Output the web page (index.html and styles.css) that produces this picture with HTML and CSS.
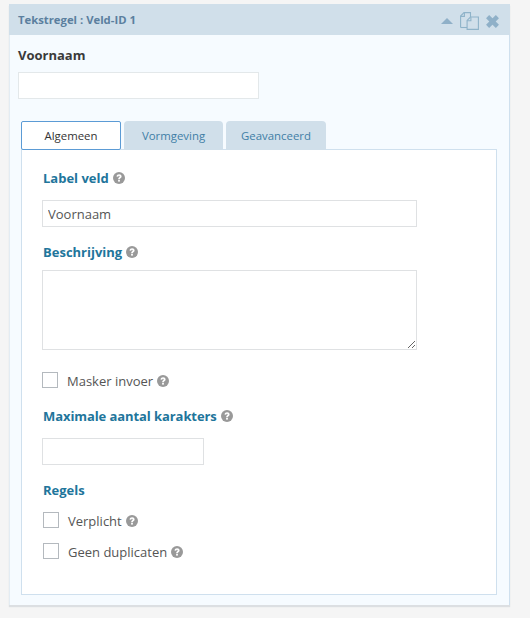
FILE: index.html
```html
<!DOCTYPE html>
<html lang="nl">
<head>
    <meta charset="UTF-8">
    <title>Tekstregel</title>
    <link rel="stylesheet" href="styles.css">
</head>
<body>
    <svg class="icon-defs" width="0" height="0">
        <symbol id="help" viewBox="0 0 12 12">
            <circle cx="6" cy="6" r="6" fill="#999"/>
            <path d="M3.5 4.6C3.7 3.1 4.7 2.3 6.1 2.3c1.4 0 2.5.9 2.5 2.1 0 1.7-1.7 1.6-1.7 2.8H5.1c0-2 1.6-2 1.6-2.8 0-.4-.3-.6-.7-.6-.5 0-.7.3-.8.9z" fill="#fff"/>
            <rect x="5.1" y="7.9" width="1.8" height="1.7" fill="#fff"/>
        </symbol>
    </svg>

    <div class="field-box">
        <div class="field-header">
            <span class="field-title">Tekstregel : Veld-ID 1</span>
            <div class="field-actions">
                <svg class="icon-up" width="12" height="6" viewBox="0 0 12 6"><path d="M6 0l6 6H0z" fill="#8fb0c8"/></svg>
                <svg class="icon-copy" width="19" height="18" viewBox="0 0 19 18" fill="none" stroke="#8fb3c9" stroke-width="1.1">
                    <path d="M.6 15.5V4L4 .6h6.5V5"/>
                    <path d="M.6 4.4h3.8V.8"/>
                    <path d="M.6 15.5h6.5"/>
                    <path d="M7.1 17.4V8.4L10.5 5h7.9v12.4z" fill="#d0dfea"/>
                    <path d="M7.1 8.8h3.8V5.2"/>
                </svg>
                <svg class="icon-close" width="13" height="13" viewBox="0 0 13 13"><path d="M1.6 1.6l9.8 9.8M11.4 1.6l-9.8 9.8" stroke="#8fb0c8" stroke-width="4.4"/></svg>
            </div>
        </div>

        <div class="field-body">
            <div class="preview-label">Voornaam</div>
            <input type="text" class="input preview-input">

            <ul class="tabs">
                <li class="tab active">Algemeen</li>
                <li class="tab tab-narrow">Vormgeving</li>
                <li class="tab">Geavanceerd</li>
            </ul>

            <div class="tab-panel">
                <div class="setting-label">Label veld <svg class="help"><use href="#help"/></svg></div>
                <input type="text" class="input input-wide" value="Voornaam">

                <div class="setting-label label-desc">Beschrijving <svg class="help"><use href="#help"/></svg></div>
                <textarea class="input textarea"></textarea>

                <label class="check check-mask"><span class="box"></span>Masker invoer <svg class="help"><use href="#help"/></svg></label>

                <div class="setting-label label-max">Maximale aantal karakters <svg class="help"><use href="#help"/></svg></div>
                <input type="text" class="input input-small">

                <div class="setting-label label-rules">Regels</div>
                <label class="check check-rule"><span class="box"></span>Verplicht <svg class="help"><use href="#help"/></svg></label>
                <label class="check check-rule"><span class="box"></span>Geen duplicaten <svg class="help"><use href="#help"/></svg></label>
            </div>
        </div>
    </div>
</body>
</html>
```

FILE: styles.css
```css
* {
    box-sizing: border-box;
    margin: 0;
    padding: 0;
}

body {
    background-color: #f5f5f5;
    font-family: "Open Sans", sans-serif;
    font-size: 13px;
    color: #444;
    padding: 4px 20px 0 9px;
    height: 618px;
    overflow: hidden;
}

.icon-defs {
    position: absolute;
}

/* Field box */
.field-box {
    width: 501px;
    height: 601px;
    background-color: #f6fbff;
    border-right: 1px solid #cfe0ee;
    border-left: 1px solid #e3ecf3;
    box-shadow: 0 2px 1px #dcdfe2;
}

.field-header {
    display: flex;
    justify-content: space-between;
    align-items: center;
    height: 31px;
    margin-right: -1px;
    margin-left: -1px;
    padding: 0 11px 0 9px;
    background-color: #d0dfea;
}

.field-title {
    font-size: 11.3px;
    font-weight: 700;
    color: #5b7f9f;
}

.field-actions {
    display: flex;
    align-items: center;
    gap: 7px;
    padding-top: 3px;
}

.field-body {
    padding: 11px 11px 0 8px;
}

.preview-label {
    font-size: 13px;
    font-weight: 700;
    line-height: 18px;
    color: #3a3a3a;
}

/* Inputs */
.input {
    display: block;
    height: 27px;
    padding: 0 5px;
    background-color: #fff;
    border: 1px solid #dfe1e3;
    font-family: "Open Sans", sans-serif;
    font-size: 13px;
    color: #555;
    outline: none;
}

.preview-input {
    width: 241px;
    margin-top: 8px;
    border-color: #e3e8ea;
}

.input-wide {
    width: 375px;
    margin-top: 13px;
}

.textarea {
    width: 375px;
    height: 80px;
    margin-top: 9px;
}

.input-small {
    width: 162px;
    margin-top: 13px;
}

/* Tabs */
.tabs {
    display: flex;
    gap: 3px;
    list-style: none;
    margin-top: 22px;
    margin-left: 3px;
}

.tab {
    width: 100px;
    height: 29px;
    background-color: #d0dfea;
    border-radius: 4px 4px 0 0;
    text-align: center;
    font-size: 11.4px;
    line-height: 29px;
    color: #3f7ea6;
}

.tab-narrow {
    width: 99px;
}

.active {
    position: relative;
    z-index: 1;
    background-color: #fff;
    border: 1px solid #5b9bd5;
    border-radius: 2px;
    line-height: 27px;
    color: #333;
}

.tab-panel {
    width: 476px;
    height: 446px;
    margin-top: -1px;
    margin-left: 3px;
    padding: 19px 0 0 20px;
    background-color: #fff;
    border: 1px solid #cfe0ee;
}

.setting-label {
    display: flex;
    align-items: center;
    gap: 4px;
    height: 18px;
    margin-left: 1px;
    font-size: 13px;
    font-weight: 700;
    color: #21759b;
}

.label-desc {
    margin-top: 16px;
}

.label-max {
    margin-top: 19px;
    letter-spacing: -0.08px;
}

.label-rules {
    margin-top: 16px;
}

.help {
    width: 12px;
    height: 12px;
    flex-shrink: 0;
}

/* Checkboxes */
.check {
    display: flex;
    align-items: center;
    gap: 4px;
    height: 16px;
    padding-top: 2px;
    font-size: 13px;
    color: #555;
}

.box {
    align-self: flex-start;
    flex-shrink: 0;
    width: 16px;
    height: 16px;
    margin-top: -2px;
    margin-right: 5px;
    background-color: #fff;
    border: 1px solid #b4b9be;
}

.check-mask {
    margin-top: 22px;
}

.check-rule {
    margin-top: 15px;
    margin-left: 1px;
}

.label-rules + .check-rule {
    margin-top: 13px;
}
```
